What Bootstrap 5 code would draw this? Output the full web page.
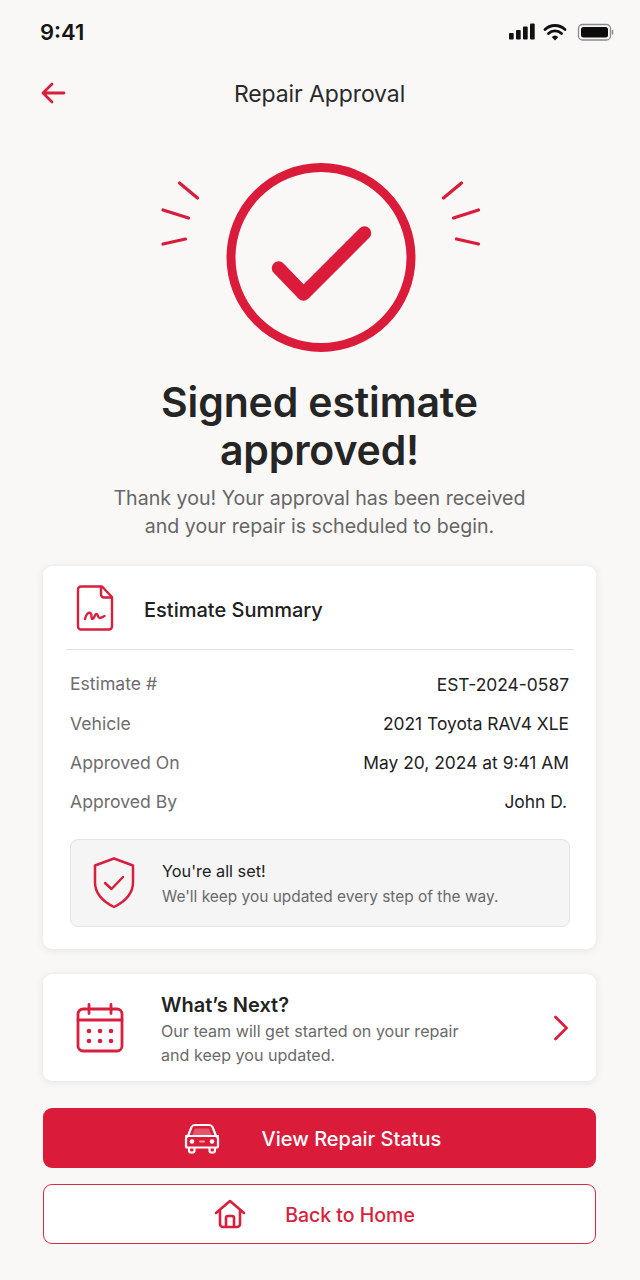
<!doctype html>
<html lang="en">
<head>
<meta charset="utf-8">
<title>Repair Approval</title>
<link href="https://cdn.jsdelivr.net/npm/bootstrap@5.3.0/dist/css/bootstrap.min.css" rel="stylesheet">
<style>
html,body{margin:0;height:1280px;overflow:hidden}
body{width:640px;background:#f9f8f6;font-family:Inter,"Liberation Sans",sans-serif;color:#232323}
svg{display:block;flex:none}
.screen{height:1280px;padding:0 44px 0 43px}
.status-row{height:64px;margin:0 -19px 0 -3px;padding-top:20px}
.status-icons{margin-top:2px}
.clock{font-size:22px;font-weight:600;line-height:24px;color:#141414}
.nav-row{height:60px}
.nav-title{font-size:23px;line-height:60px;color:#2a2a2a;letter-spacing:-.1px}
.back-btn{left:-3px;top:16px}
.hero-art{margin:39px auto 0;width:320px;height:190px}
.main-title{font-size:41px;line-height:48px;font-weight:600;color:#252525;margin:25px 0 0;letter-spacing:-.15px}
.sub-text{font-size:19.6px;line-height:28px;color:#666;margin:10px 0 0}
.sheet{background:#fff;border-radius:9px;box-shadow:0 1px 8px rgba(0,0,0,.09)}
.sheet-one{margin-top:26px;height:383px;padding:0 26px 0 27px}
.sheet-head{height:84px;margin:0 -4px;padding-left:10px;padding-top:4px;gap:30px;border-bottom:1px solid #e2e2e2}
.doc-icon{margin-top:-4px}
.sheet-title{font-size:20px;font-weight:500;color:#202020}
.info-row{height:39.3px;font-size:17.4px;color:#222}
.info-row span:first-child{color:#6d6d6d;font-size:17.6px}
.info-list{padding:15px 1px 0 0}
.name-end{margin-right:2px}
.note-box{margin-top:17px;height:88px;background:#f5f5f5;border:1px solid #e3e3e3;border-radius:8px;padding-left:21px;gap:26px}
.note-a{font-size:16.3px;line-height:26px;color:#222}
.note-b{font-size:15.45px;line-height:25px;color:#6a6a6a}
.sheet-two{margin-top:25px;height:107px;padding:0 27px 0 33px;gap:37px}
.next-copy{padding-top:3px}
.next-title{font-size:20px;line-height:27px;font-weight:600;color:#232323}
.next-text{font-size:16.1px;line-height:24px;color:#6a6a6a}
.act{height:60px;border-radius:9px;font-size:20px;font-weight:500;padding:0}
.act span{padding-top:1px}
.act-solid{margin-top:27px;background:#da1c3a;border:0;color:#fff;gap:42px;padding-right:14px}
.act-line{margin-top:16px;background:#fff;border:1.5px solid #d62a48;color:#d81f3d;gap:39px;padding-right:10px;font-size:19.5px}
.act-line span{padding-top:3px}
.act-solid:hover{background:#da1c3a;color:#fff}
.act-line:hover{background:#fff;color:#d81f3d}
</style>
</head>
<body>
<div class="screen d-flex flex-column">
  <div class="status-row d-flex justify-content-between align-items-start">
    <div class="clock">9:41</div>
    <svg class="status-icons" width="106" height="24" viewBox="0 0 106 24" aria-hidden="true">
      <g fill="#111"><rect x="0" y="11" width="4.700" height="6.500" rx="1"/><rect x="7" y="8" width="4.700" height="9.500" rx="1"/><rect x="14" y="4.500" width="4.700" height="13" rx="1"/><rect x="21" y="1.500" width="4.700" height="16" rx="1"/></g>
      <path d="M36 7.500a14.500 14.500 0 0 1 20 0M39.500 11.500a9.500 9.500 0 0 1 13 0" fill="none" stroke="#111" stroke-width="2.800" stroke-linecap="round"/>
      <path d="M42.700 15a4.800 4.800 0 0 1 6.600 0L46 18.500z" fill="#111"/>
      <rect x="69.500" y="2.500" width="32" height="15.500" rx="4" fill="none" stroke="#8a8a8a" stroke-width="1.300"/>
      <rect x="72" y="5" width="27" height="10.500" rx="2.500" fill="#0c0c0c"/>
      <path d="M103.500 8.500v3.500" stroke="#8a8a8a" stroke-width="1.500" stroke-linecap="round"/>
    </svg>
  </div>
  <div class="nav-row position-relative text-center">
    <a class="back-btn position-absolute" href="#" aria-label="Back">
      <svg width="26" height="26" viewBox="0 0 26 26"><path d="M24 13H3M12 4l-9 9 9 9" fill="none" stroke="#d81f3d" stroke-width="2.800" stroke-linecap="round" stroke-linejoin="round"/></svg>
    </a>
    <div class="nav-title">Repair Approval</div>
  </div>
  <svg class="hero-art" viewBox="0 0 320 190" aria-hidden="true">
    <circle cx="161" cy="94.500" r="90" fill="none" stroke="#da1c3a" stroke-width="9"/>
    <path d="M118.500 105l25 26 61-61" fill="none" stroke="#da1c3a" stroke-width="13.500" stroke-linecap="round" stroke-linejoin="round"/>
    <g stroke="#da1c3a" stroke-width="3.200" stroke-linecap="round" fill="none">
      <path d="M19.500 20l18 15M3 47l25.500 8M3 81l22.500-5M301.500 20l-18 15M318.500 47l-25 8M296.500 76l22 5"/>
    </g>
  </svg>
  <h1 class="main-title text-center">Signed estimate<br>approved!</h1>
  <p class="sub-text text-center">Thank you! Your approval has been received<br>and your repair is scheduled to begin.</p>

  <section class="sheet sheet-one">
    <div class="sheet-head d-flex align-items-center">
      <svg class="doc-icon" width="38" height="46" viewBox="0 0 38 46" aria-hidden="true">
        <path d="M5 1.500h21l10 10.500v29.500a3 3 0 0 1-3 3H5a3 3 0 0 1-3-3v-37a3 3 0 0 1 3-3z" fill="none" stroke="#d81f3d" stroke-width="2.400" stroke-linejoin="round"/>
        <path d="M25 2v7.500a3 3 0 0 0 3 3h7.500" fill="none" stroke="#d81f3d" stroke-width="2.400" stroke-linejoin="round"/>
        <path d="M9 34c1-5 3.500-7 5.500-6 2 1 0 6 2 6s2-5 4-5 1 4 3 4 3-1 5-2" fill="none" stroke="#d81f3d" stroke-width="2.400" stroke-linecap="round" stroke-linejoin="round"/>
      </svg>
      <div class="sheet-title">Estimate Summary</div>
    </div>
    <div class="info-list">
      <div class="info-row d-flex justify-content-between align-items-center"><span>Estimate #</span><span>EST-2024-0587</span></div>
      <div class="info-row d-flex justify-content-between align-items-center"><span>Vehicle</span><span>2021 Toyota RAV4 XLE</span></div>
      <div class="info-row d-flex justify-content-between align-items-center"><span>Approved On</span><span>May 20, 2024 at 9:41 AM</span></div>
      <div class="info-row d-flex justify-content-between align-items-center"><span>Approved By</span><span class="name-end">John D.</span></div>
    </div>
    <div class="note-box d-flex align-items-center">
      <svg width="44" height="52" viewBox="0 0 44 52" aria-hidden="true">
        <path d="M22 1.500l19 7v17c0 11-8 19-19 24.500C11 44.500 3 36.500 3 25.500v-17z" fill="none" stroke="#d81f3d" stroke-width="2.500" stroke-linejoin="round"/>
        <path d="M13 26l6.500 6L31 20" fill="none" stroke="#d81f3d" stroke-width="2.500" stroke-linecap="round" stroke-linejoin="round"/>
      </svg>
      <div>
        <div class="note-a">You're all set!</div>
        <div class="note-b">We'll keep you updated every step of the way.</div>
      </div>
    </div>
  </section>

  <section class="sheet sheet-two d-flex align-items-center">
    <svg width="48" height="50" viewBox="0 0 48 50" aria-hidden="true">
      <rect x="2" y="6" width="44" height="42" rx="5" fill="none" stroke="#d81f3d" stroke-width="2.800"/>
      <path d="M2 17h44M13 1.500v9M35 1.500v9" fill="none" stroke="#d81f3d" stroke-width="2.800" stroke-linecap="round"/>
      <g fill="#d81f3d"><circle cx="13" cy="28" r="2.300"/><circle cx="24" cy="28" r="2.300"/><circle cx="35" cy="28" r="2.300"/><circle cx="13" cy="38" r="2.300"/><circle cx="24" cy="38" r="2.300"/><circle cx="35" cy="38" r="2.300"/></g>
    </svg>
    <div class="flex-grow-1 next-copy">
      <div class="next-title">What’s Next?</div>
      <div class="next-text">Our team will get started on your repair<br>and keep you updated.</div>
    </div>
    <svg width="16" height="26" viewBox="0 0 16 26" aria-hidden="true"><path d="M2.500 2l11 11-11 11" fill="none" stroke="#d81f3d" stroke-width="2.800" stroke-linecap="round" stroke-linejoin="round"/></svg>
  </section>

  <a href="#" class="btn act act-solid d-flex align-items-center justify-content-center">
    <svg width="36" height="32" viewBox="0 0 36 32" aria-hidden="true">
      <path d="M4 14l3.500-9A4 4 0 0 1 11 3h14a4 4 0 0 1 3.500 2L32 14M2 14h32M4 14a3 3 0 0 0-2 3v7a1.500 1.500 0 0 0 1.500 1.500h29A1.500 1.500 0 0 0 34 24v-7a3 3 0 0 0-2-3M5 26v2.500a2 2 0 0 0 2 2h1.500a2 2 0 0 0 2-2V26M25.500 26v2.500a2 2 0 0 0 2 2H29a2 2 0 0 0 2-2V26" fill="none" stroke="#fff" stroke-width="2.200" stroke-linecap="round" stroke-linejoin="round"/>
      <path d="M8 14l2.500-6.500A2 2 0 0 1 12 6.500h12a2 2 0 0 1 1.500 1L28 14z" fill="#fff" fill-opacity=".25"/>
      <circle cx="8" cy="19.500" r="2.300" fill="#fff"/><circle cx="28" cy="19.500" r="2.300" fill="#fff"/>
      <path d="M16 19.500h4" stroke="#fff" stroke-opacity=".6" stroke-width="2" stroke-linecap="round"/>
    </svg>
    <span>View Repair Status</span>
  </a>
  <a href="#" class="btn act act-line d-flex align-items-center justify-content-center">
    <svg width="32" height="30" viewBox="0 0 32 30" aria-hidden="true">
      <path d="M2 14L16 2l14 12M6 11.500V25a3 3 0 0 0 3 3h14a3 3 0 0 0 3-3V11.500" fill="none" stroke="#d81f3d" stroke-width="2.600" stroke-linecap="round" stroke-linejoin="round"/>
      <path d="M12 28V19a2 2 0 0 1 2-2h4a2 2 0 0 1 2 2v9" fill="none" stroke="#d81f3d" stroke-width="2.600" stroke-linejoin="round"/>
    </svg>
    <span>Back to Home</span>
  </a>
</div>
</body>
</html>
